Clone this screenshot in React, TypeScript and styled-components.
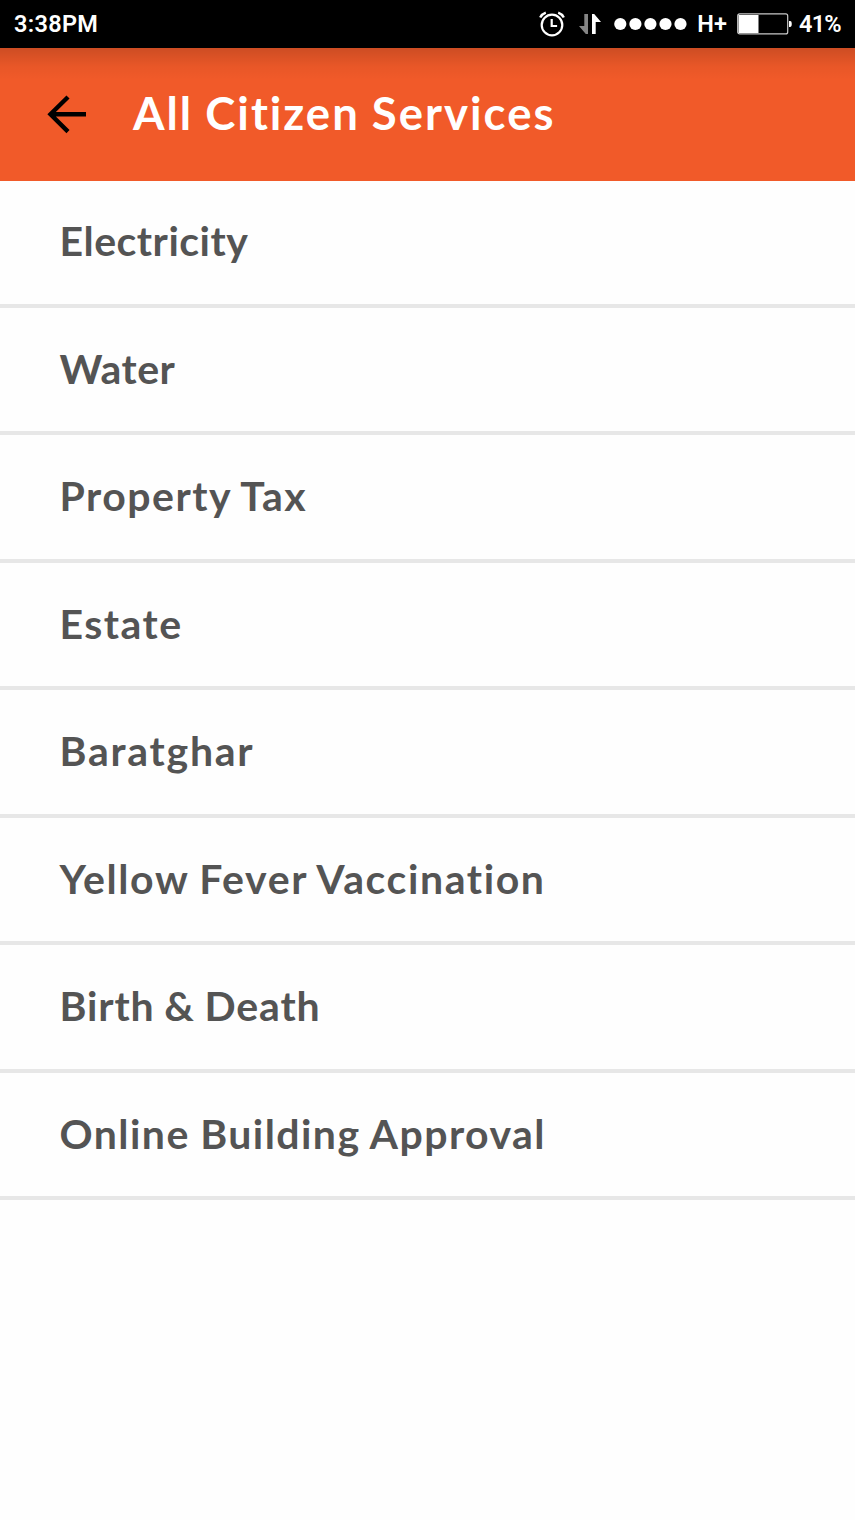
import React from "react";
import styled, { createGlobalStyle } from "styled-components";

const GlobalStyle = createGlobalStyle`
  *, *::before, *::after { box-sizing: border-box; }
  body { margin: 0; background: #fefefe; }
`;

const Screen = styled.div`
  min-height: 1520px;
  background: #fefefe;
  font-family: Lato, sans-serif;
  font-variant-ligatures: none;
`;

const StatusBar = styled.div`
  display: flex;
  align-items: center;
  height: 47.5px;
  padding: 0 14px 0 14px;
  background: #000;
  color: #fff;
  font: 600 23.5px/47px Roboto, sans-serif;
`;

const StatusText = styled.span<{ $tracking?: number }>`
  padding-top: 1px;
  white-space: nowrap;
  letter-spacing: ${(p) => p.$tracking ?? 0}px;
`;

const StatusIcons = styled.div`
  display: flex;
  align-items: center;
  height: 47px;
  margin-left: auto;
`;

const Glyph = styled.svg<{ $gap: number; $lead?: number }>`
  display: block;
  flex: none;
  margin-left: ${(p) => p.$lead ?? 0}px;
  margin-right: ${(p) => p.$gap}px;
`;

const Header = styled.header`
  display: flex;
  align-items: center;
  height: 133px;
  padding-left: 47px;
  color: #fff;
  background: linear-gradient(rgba(0, 0, 0, 0.15), rgba(0, 0, 0, 0.04) 18px, transparent 32px) #f15a29;
`;

const BackButton = styled.button`
  display: block;
  width: 40px;
  height: 40px;
  padding: 0;
  border: 0;
  background: none;
`;

const Title = styled.h1`
  margin: 0 0 2px 46px;
  font-size: 45.5px;
  font-weight: 700;
  line-height: 60px;
  white-space: nowrap;
  letter-spacing: 2px;
  word-spacing: -1px;
`;

const ServiceList = styled.ul`
  margin: 0;
  padding: 0;
  list-style: none;
`;

const ServiceRow = styled.li`
  display: flex;
  align-items: center;
  height: 127.45px;
  padding: 0 0 1.5px 59.5px;
  border-bottom: 4px solid #e7e7e7;
`;

const ServiceName = styled.span<{ $tracking: number }>`
  color: #545454;
  font-size: 41px;
  font-weight: 700;
  line-height: 56px;
  white-space: nowrap;
  letter-spacing: ${(p) => p.$tracking}px;
  word-spacing: -1px;
`;

const services = [
  { name: "Electricity", tracking: 0.5 },
  { name: "Water", tracking: 0.5 },
  { name: "Property Tax", tracking: 1.5 },
  { name: "Estate", tracking: 1.5 },
  { name: "Baratghar", tracking: 1.75 },
  { name: "Yellow Fever Vaccination", tracking: 1.6 },
  { name: "Birth & Death", tracking: 0.85 },
  { name: "Online Building Approval", tracking: 1.45 },
];

export default function App() {
  return (
    <Screen>
      <GlobalStyle />
      <StatusBar>
        <StatusText $tracking={0.3}>3:38PM</StatusText>
        <StatusIcons>
          <Glyph $gap={14} width="26" height="26" viewBox="0 0 26 26" fill="none" stroke="#fff" strokeWidth="2.2">
            <circle cx="13" cy="14" r="10.3" />
            <path d="M12.7 8v7h5.4" />
            <path d="M1.2 6.5Q3 3 6.8 1.7M24.8 6.5Q23 3 19.2 1.7" strokeWidth="2.4" />
          </Glyph>
          <Glyph $gap={13} width="22" height="22" viewBox="0 0 22 22">
            <path d="M5.3 1H9v20H6.8L0 13h5.3z" fill="#858585" />
            <path d="M13 1h2.2L22 9h-5.3v12H13z" fill="#fff" />
          </Glyph>
          <Glyph $gap={10} width="73" height="14" viewBox="0 0 73 14" fill="#fff">
            <circle cx="6.3" cy="7" r="6.1" />
            <circle cx="21.4" cy="7" r="6.1" />
            <circle cx="36.4" cy="7" r="6.1" />
            <circle cx="51.5" cy="7" r="6.1" />
            <circle cx="66.5" cy="7" r="6.1" />
          </Glyph>
          <StatusText>H+</StatusText>
          <Glyph $gap={6.5} $lead={10.5} width="55" height="22" viewBox="0 0 55 22">
            <rect x="0.7" y="0.9" width="50" height="20" rx="2" fill="none" stroke="#c8c8c8" strokeWidth="1.2" />
            <path d="M1.5 2h20v18h-20z" fill="#fff" />
            <path d="M52 8h1.4q1.4 0 1.4 3t-1.4 3H52z" fill="#fff" />
          </Glyph>
          <StatusText $tracking={-0.7}>41%</StatusText>
        </StatusIcons>
      </StatusBar>
      <Header>
        <BackButton aria-label="Back">
          <svg width="40" height="40" viewBox="0 0 40 40" fill="none" stroke="#000" strokeWidth="4.4">
            <path d="M39 20.3H4M21 3 3.5 20.3 21 37.6" />
          </svg>
        </BackButton>
        <Title>All Citizen Services</Title>
      </Header>
      <ServiceList>
        {services.map((s) => (
          <ServiceRow key={s.name}>
            <ServiceName $tracking={s.tracking}>{s.name}</ServiceName>
          </ServiceRow>
        ))}
      </ServiceList>
    </Screen>
  );
}
